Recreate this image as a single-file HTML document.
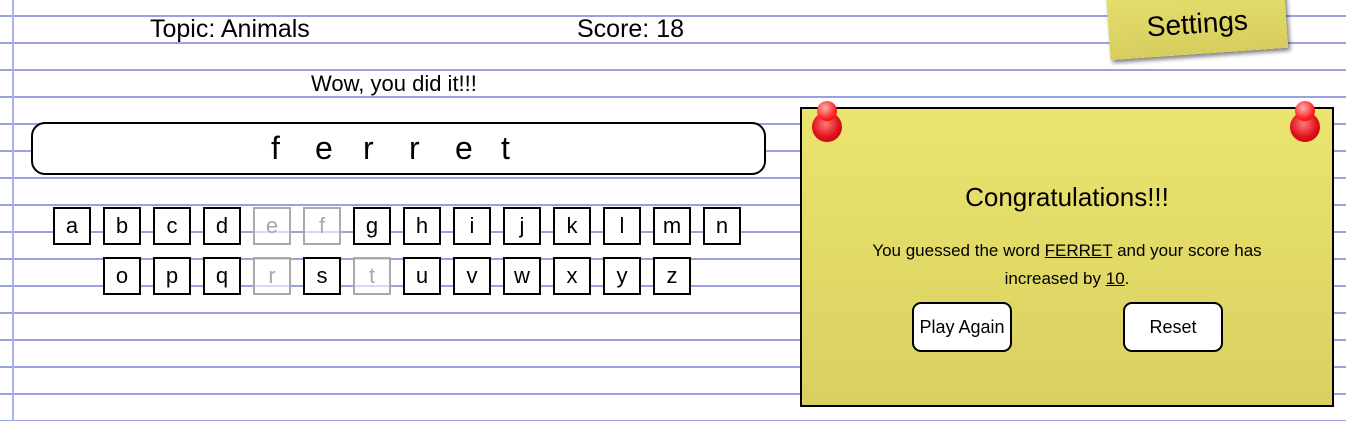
<!DOCTYPE html><html><head><style>
body{margin:0;width:1346px;height:421px;overflow:hidden;position:relative;font-family:"Liberation Sans",sans-serif;color:#000;
background:repeating-linear-gradient(to bottom,transparent 0,transparent 15px,#99a2df 15px,#99a2df 17px,transparent 17px,transparent 27px);background-color:#fff}
.v{position:absolute;left:12px;top:0;width:2px;height:421px;background:#aab1ef}
.t{position:absolute;font-size:25px;white-space:nowrap}
.word{position:absolute;left:31px;top:122px;width:731px;height:49px;border:2px solid #000;border-radius:14px;background:#fff}
.word span{position:absolute;top:6px;font-size:32px}
.k{position:absolute;width:34px;height:34px;border:2px solid #000;background:#fff;font-size:22px;text-align:center;line-height:34px}
.k.d{border-color:#aaa;color:#aaa;background:rgba(255,255,255,.6)}
.card{position:absolute;left:800px;top:107px;width:530px;height:296px;border:2px solid #000;background:linear-gradient(#ebe46f,#d9d060)}
.pin{position:absolute;width:30px;height:30px;border-radius:50%;background:radial-gradient(circle at 45% 40%,#ff7a7a,#e0101a 55%,#a00 100%)}
.pin:after{content:"";position:absolute;left:5px;top:-11px;width:20px;height:20px;border-radius:50%;background:radial-gradient(circle at 40% 35%,#ffb0b0,#f22 60%,#c00)}
.btn{position:absolute;height:46px;border:2px solid #000;border-radius:9px;background:#fff;font-size:18px;text-align:center;line-height:46px}
.set{position:absolute;left:1108px;top:-14px;width:178px;height:68px;background:linear-gradient(#e6df6c,#d6cd5f);transform:rotate(-4deg);box-shadow:2px 3px 4px rgba(0,0,0,.5);font-size:28px;text-align:center;line-height:56px;padding-top:0}
</style></head><body>
<div class="v"></div>
<div class="t" style="left:150px;top:15px">Topic: Animals</div>
<div class="t" style="left:577px;top:15px">Score: 18</div>
<div class="t" style="left:311px;top:71px;font-size:22px">Wow, you did it!!!</div>
<div class="word"><span style="left:238px">f</span><span style="left:282px">e</span><span style="left:330px">r</span><span style="left:376px">r</span><span style="left:422px">e</span><span style="left:468px">t</span></div>
<div class="k" style="left:53px;top:207px">a</div><div class="k" style="left:103px;top:207px">b</div><div class="k" style="left:153px;top:207px">c</div><div class="k" style="left:203px;top:207px">d</div><div class="k d" style="left:253px;top:207px">e</div><div class="k d" style="left:303px;top:207px">f</div><div class="k" style="left:353px;top:207px">g</div><div class="k" style="left:403px;top:207px">h</div><div class="k" style="left:453px;top:207px">i</div><div class="k" style="left:503px;top:207px">j</div><div class="k" style="left:553px;top:207px">k</div><div class="k" style="left:603px;top:207px">l</div><div class="k" style="left:653px;top:207px">m</div><div class="k" style="left:703px;top:207px">n</div>
<div class="k" style="left:103px;top:257px">o</div><div class="k" style="left:153px;top:257px">p</div><div class="k" style="left:203px;top:257px">q</div><div class="k d" style="left:253px;top:257px">r</div><div class="k" style="left:303px;top:257px">s</div><div class="k d" style="left:353px;top:257px">t</div><div class="k" style="left:403px;top:257px">u</div><div class="k" style="left:453px;top:257px">v</div><div class="k" style="left:503px;top:257px">w</div><div class="k" style="left:553px;top:257px">x</div><div class="k" style="left:603px;top:257px">y</div><div class="k" style="left:653px;top:257px">z</div>
<div class="set"><div style="margin-top:10px">Settings</div></div>
<div class="card">
<div class="pin" style="left:10px;top:3px"></div><div class="pin" style="left:488px;top:3px"></div>
<div style="position:absolute;left:0;right:0;top:73px;text-align:center;font-size:26px">Congratulations!!!</div>
<div style="position:absolute;left:60px;right:60px;top:128px;text-align:center;font-size:17px;line-height:28px">You guessed the word <u>FERRET</u> and your score has increased by <u>10</u>.</div>
<div class="btn" style="left:110px;top:193px;width:96px">Play Again</div>
<div class="btn" style="left:321px;top:193px;width:96px">Reset</div>
</div>
</body></html>
